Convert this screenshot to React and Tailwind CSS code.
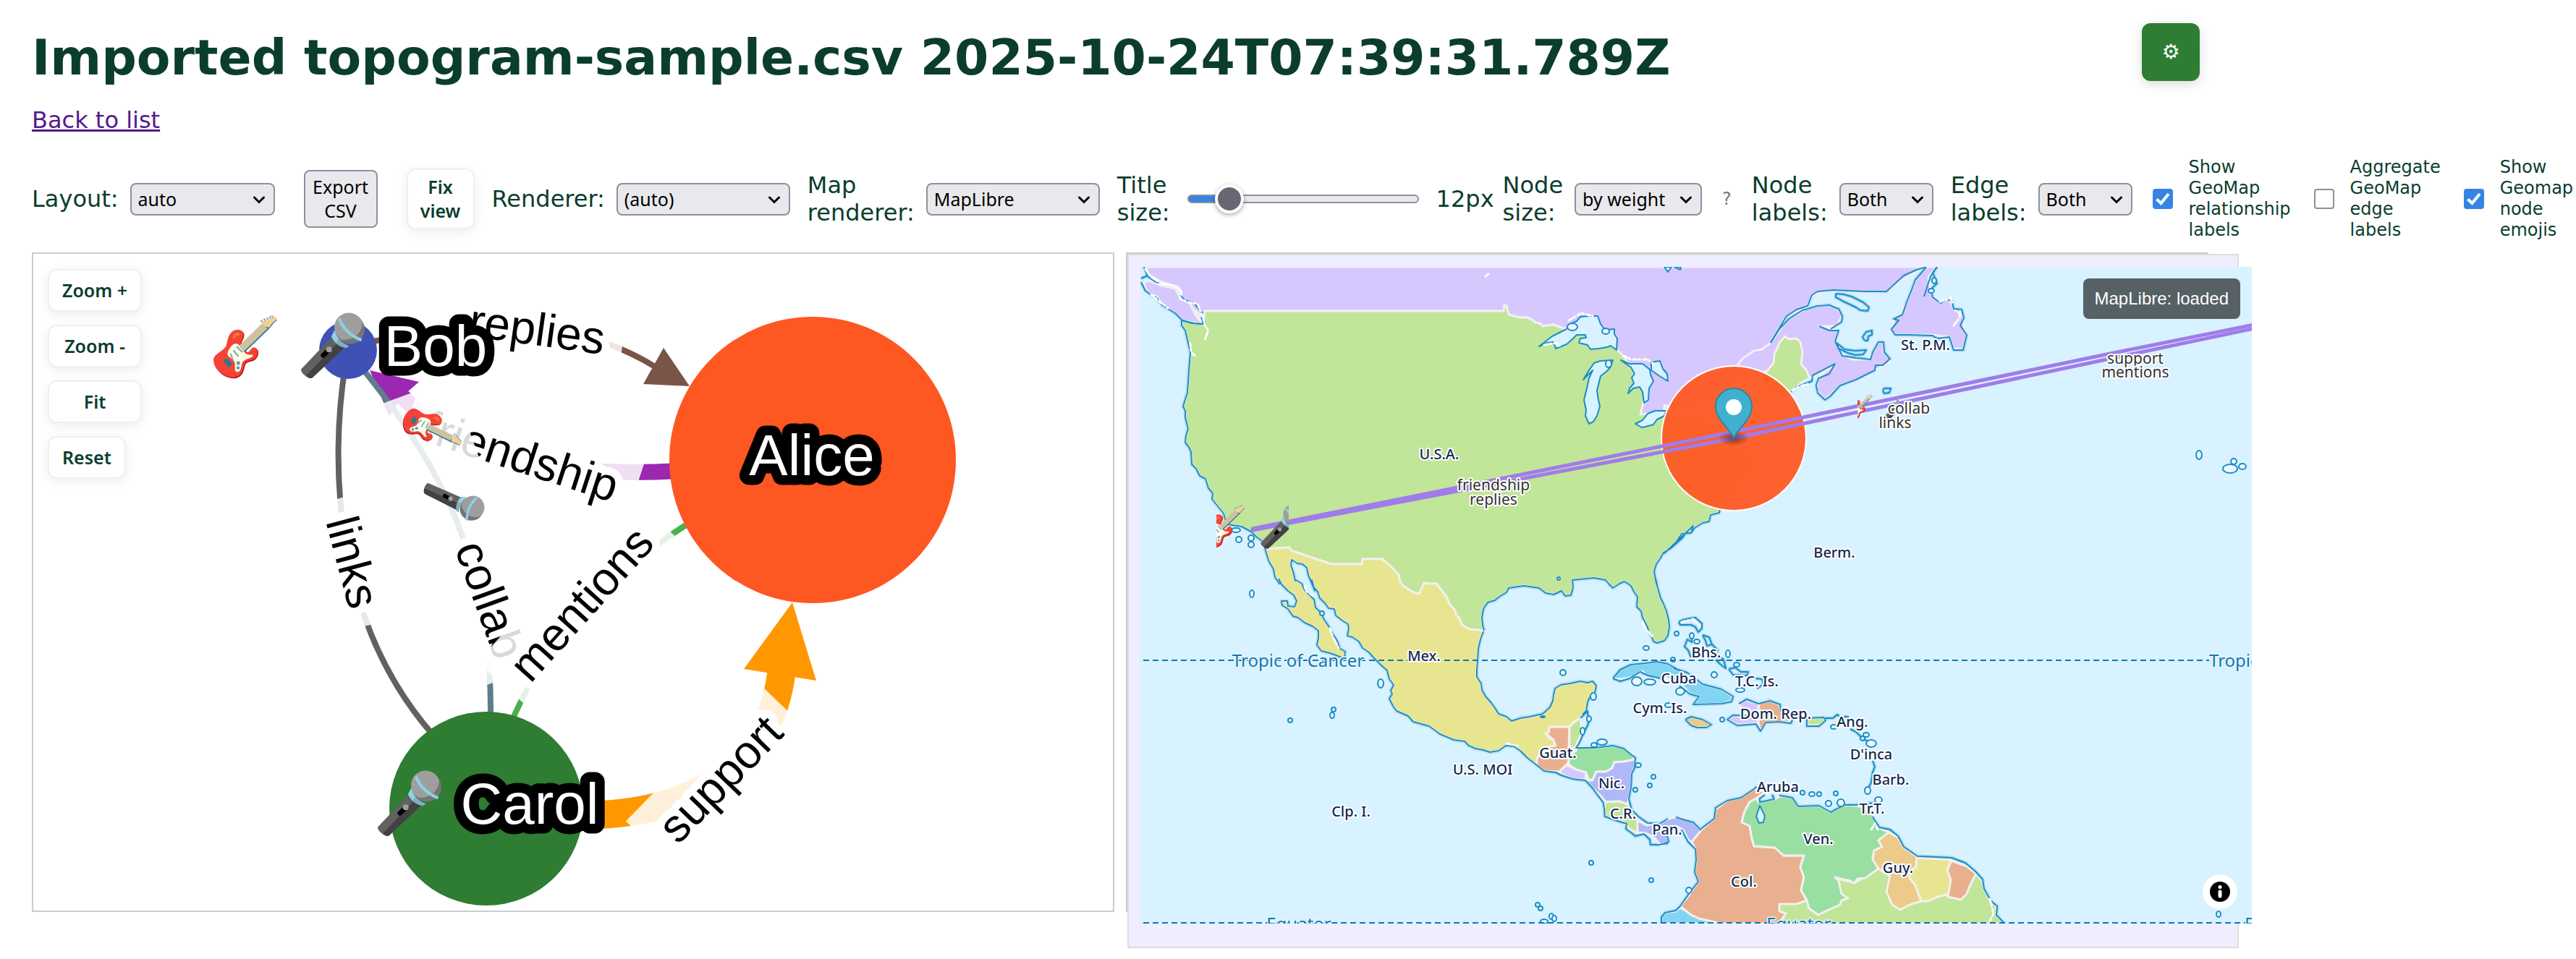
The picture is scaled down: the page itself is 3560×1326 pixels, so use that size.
import React from "react";

/* ---------- toolbar pieces ---------- */

function Select({ id, label, width, options, value }) {
  return (
    <div className="flex shrink-0 items-center gap-4">
      <label htmlFor={id} className="w-min text-[32px] leading-[38px]">
        {label}
      </label>
      <div className={"relative " + width}>
        <select
          id={id}
          defaultValue={value}
          className="block h-[45px] w-full appearance-none rounded-lg border-2 border-[#8f8f9d] bg-[#e9e9ed] pl-[9px] font-['Noto_Sans',sans-serif] text-[25px] leading-[33px] text-black"
        >
          {options.map((o) => (
            <option key={o}>{o}</option>
          ))}
        </select>
        <svg
          className="pointer-events-none absolute top-[18px] right-[13px] h-[11px] w-[18px]"
          viewBox="0 0 18 11"
          fill="none"
          stroke="#000"
          strokeWidth="3"
          strokeLinecap="round"
        >
          <path d="M2.500 2 L9 8.500 L15.500 2" />
        </svg>
      </div>
    </div>
  );
}

function Check({ id, label, checked }) {
  return (
    <div className="mx-1 flex shrink-0 items-center gap-[22px]">
      <span className="relative block size-7">
        <input
          id={id}
          type="checkbox"
          defaultChecked={checked}
          className="block size-7 appearance-none rounded-sm border-2 border-[#8f8f9d] bg-white checked:border-[#3584e4] checked:bg-[#3584e4]"
        />
        {checked && (
          <svg
            className="pointer-events-none absolute inset-0 size-7"
            viewBox="0 0 28 28"
            fill="none"
            stroke="#fff"
            strokeWidth="4"
          >
            <path d="M5.500 14.500 L11.500 20 L22 7" />
          </svg>
        )}
      </span>
      <label htmlFor={id} className="w-min text-2xl leading-[29px]">
        {label}
      </label>
    </div>
  );
}

const softButton =
  "rounded-xl border-2 border-[#f0f0f0] bg-white font-['Noto_Sans',sans-serif] text-[25px] leading-[33px] font-semibold text-[#0b3d2e] shadow-[0_4px_16px_rgba(0,0,0,0.07)]";

/* ---------- emoji drawings, on a 300 unit grid centred on (x, y) ---------- */

function Guitar({ x, y, size }) {
  return (
    <g transform={`translate(${x} ${y}) scale(${size / 240}) translate(-150 -150)`}>
      <path
        d="M74 156 C82 134 80 88 122 84 C152 86 150 108 136 130 C132 144 144 168 164 177 C178 174 174 160 188 158 C208 158 210 184 193 203 C178 218 158 208 149 228 C144 252 138 282 102 283 C62 282 22 249 20 208 C26 183 59 176 74 156 Z"
        fill="#b71c1c"
      />
      <path
        d="M70 150 C78 130 76 84 118 80 C148 82 147 105 132 128 C128 140 140 165 160 174 C174 171 170 156 185 154 C204 155 206 180 190 198 C175 213 155 203 145 224 C140 247 134 277 99 278 C59 277 18 245 18 204 C22 180 55 172 70 150 Z"
        fill="#f44336"
      />
      <path d="M98 108 C104 92 124 88 128 98 C128 108 106 106 100 124 Z" fill="#ff7043" />
      <path
        d="M78 172 C86 152 104 132 118 140 C134 147 138 168 153 181 C168 190 180 180 182 188 C172 204 142 198 136 222 C132 242 130 256 115 256 C98 250 116 224 100 206 C90 196 70 190 78 172 Z"
        fill="#fffde7"
      />
      <path d="M128 152 L148 174 L250 76 L238 64 Z" fill="#2f7889" />
      <path d="M124 148 L144 170 L246 72 L224 50 Z" fill="#cdc1a0" />
      <path d="M218 54 C224 40 240 44 252 34 C262 26 276 22 281 34 C279 42 266 42 262 52 C256 70 248 72 236 68 Z" fill="#f7cf90" />
      <path d="M236 71 L250 73 L266 52 L280 40" stroke="#2f7889" strokeWidth="4" fill="none" />
      <path d="M214 42 l8 6 M226 36 l8 6 M238 32 l7 5 M248 27 l7 5 M258 23 l7 5" stroke="#82aec0" strokeWidth="7" fill="none" />
      <path d="M116 152 L136 172 M102 168 L120 190 M90 182 L98 206" stroke="#82aec0" strokeWidth="7" fill="none" strokeLinecap="round" />
      <path d="M70 198 L97 222 L84 238 L57 212 Z" fill="#2f7889" />
      <circle cx="121" cy="219" r="8" fill="#6aa0b8" />
      <circle cx="120" cy="239" r="7" fill="#6aa0b8" />
    </g>
  );
}

function Microphone({ x, y, size }) {
  return (
    <g transform={`translate(${x} ${y}) scale(${size / 240}) translate(-150 -150)`}>
      <path d="M148 108 L200 154 L66 279 C52 290 12 258 19 244 Z" fill="#616161" />
      <path d="M172 132 L200 154 L66 279 C58 286 46 280 38 272 Z" fill="#424242" />
      <path d="M110 187 L128 170" stroke="#000" strokeWidth="20" strokeLinecap="round" />
      <circle cx="134" cy="163" r="12" fill="#9e9e9e" />
      <circle cx="221" cy="79" r="61" fill="#757575" />
      <path d="M272 48 C276 90 236 128 186 122 A60 60 0 1 1 272 48 Z" fill="#9e9e9e" />
      <path d="M158 82 C162 112 186 136 217 148 C208 158 200 158 192 154 C168 146 150 128 144 108 Z" fill="#82aec0" />
      <path d="M158 82 C160 98 166 108 174 118 L164 134 C154 126 146 116 144 108 Z" fill="#92d1e0" />
      <path d="M178 40 C196 80 226 106 264 122" stroke="#8dd0e0" strokeWidth="13" strokeLinecap="round" fill="none" />
    </g>
  );
}

/* ---------- network graph ---------- */

function EdgeLabel({ x, y, angle, length, lead = 0, children, extra }) {
  return (
    <g transform={`translate(${x} ${y}) rotate(${angle})`}>
      <rect x={-26 - lead} y={-75} width={length + 52 + lead} height={112} fill="#fff" opacity="0.85" />
      {extra}
      <text
        fontSize="64"
        fill="#000"
        stroke="#fff"
        strokeWidth="22"
        strokeLinejoin="round"
        paintOrder="stroke"
      >
        {children}
      </text>
    </g>
  );
}

function NodeLabel({ x, y, children }) {
  return (
    <text
      x={x}
      y={y}
      fontSize="80"
      textAnchor="middle"
      fill="#fff"
      stroke="#000"
      strokeWidth="27"
      strokeLinejoin="round"
      paintOrder="stroke"
    >
      {children}
    </text>
  );
}

function Graph() {
  return (
    <svg
      className="block h-auto w-full"
      viewBox="46 351 1492 908"
      fontFamily="'Liberation Sans', Arial, sans-serif"
      fill="none"
    >
      <path d="M478 500 C455 640 460 860 600 1018" stroke="#616161" strokeWidth="8" />
      <EdgeLabel x={450} y={721} angle={75} length={128}>links</EdgeLabel>

      <path d="M505 474 C680 440 800 440 910 510" stroke="#795548" strokeWidth="8" />
      <path d="M953 534 L917 481 L889 531 Z" fill="#795548" />
      <EdgeLabel x={646} y={464} angle={8} length={188}>replies</EdgeLabel>

      <path d="M552 544 C640 640 780 660 940 651" stroke="#9c27b0" strokeWidth="22" />
      <path d="M511 512 L579 528 L556 548 L538 575 Z" fill="#9c27b0" />
      <EdgeLabel x={582} y={609} angle={18} length={277}>friendship</EdgeLabel>

      <path d="M496 504 C610 640 680 780 678 990" stroke="#607d8b" strokeWidth="8" />
      <EdgeLabel
        x={628}
        y={758}
        angle={70}
        length={167}
        lead={196}
        extra={
          <>
            <Guitar x={-166} y={-26} size={64} />
            <Microphone x={-62} y={-22} size={64} />
          </>
        }
      >
        collab
      </EdgeLabel>

      <path d="M672 1118 Q727 798 1123 636" stroke="#4caf50" strokeWidth="8" />
      <EdgeLabel x={733} y={946} angle={-48} length={260}>mentions</EdgeLabel>

      <path d="M780 1127 C930 1132 1060 1082 1080 930" stroke="#ff9800" strokeWidth="39" />
      <path d="M1095 833 L1028 925 L1128 941 Z" fill="#ff9800" />
      <EdgeLabel x={937} y={1169} angle={-46} length={213}>support</EdgeLabel>

      <circle cx="481" cy="484" r="40" fill="#3f51b5" />
      <circle cx="1123" cy="636" r="198" fill="#ff5722" />
      <circle cx="672" cy="1118" r="134" fill="#2e7d32" />
      <Guitar x={339} y={479} size={80} />
      <Microphone x={460} y={479} size={80} />
      <Microphone x={566} y={1112} size={80} />
      <NodeLabel x={602} y={506}>Bob</NodeLabel>
      <NodeLabel x={1122} y={657}>Alice</NodeLabel>
      <NodeLabel x={732} y={1139}>Carol</NodeLabel>
    </svg>
  );
}

/* ---------- map ---------- */

/* Outlines are digitised per map tile; each tile maps its own grid to map units. */
const tile = (x0, y0, sx, sy) => (s) =>
  s
    .trim()
    .split(/\s+/)
    .map((p) => {
      const [x, y] = p.split(",").map(Number);
      return `${Math.round(x0 + x * sx)},${Math.round(y0 + y * sy)}`;
    })
    .join(" ");
const nw = tile(1540, 340, 0.5102, 0.3333);
const ne = tile(2300, 340, 0.5293, 0.3333);
const sw = tile(1540, 800, 0.5102, 0.3355);
const se = tile(2300, 800, 0.5293, 0.3355);

const westCoast = nw(
  "400,1225 385,1205 370,1185 345,1165 305,1155 300,1130 295,1110 280,1080 265,1050 267,1025 255,1005 247,965 232,955 222,925 210,905 208,855 202,835 192,815 195,785 200,760 192,710 192,685 186,665 192,635 198,610 202,520 205,440 198,390 192,350 182,330 182,310 210,320 242,325"
);
const usNorth = nw(
  "245,270 1055,270 1057,246 1062,250 1068,285 1082,292 1100,298 1118,296 1130,305 1140,318 1152,322 1160,333 1190,328 1205,335 1225,345 1310,350 1360,430 1380,460 1440,600 1425,700 1490,690"
);
const usEast = ne(
  "145,1085 143,1108 120,1115 118,1142 100,1148 80,1170 70,1192 45,1195 30,1230 15,1255 0,1275"
);
const usEast2 = nw("1568,1160 1562,1190 1548,1190 1538,1212 1520,1235 1505,1258 1488,1272 1478,1298 1468,1320 1463,1350 1466,1385 1470,1410");
const florida = sw(
  "1466,0 1472,40 1480,80 1488,105 1495,135 1502,170 1503,200 1500,235 1490,255 1470,264 1460,258 1456,240 1448,225 1444,200 1430,160 1426,135 1415,115 1418,75 1408,55 1400,30 1382,12 1368,20 1350,38 1338,22 1330,5 1300,-4 1240,5 1242,35 1236,68 1222,72 1212,52 1190,66 1168,60 1150,40 1110,30 1068,40 1062,58 1042,75 1030,88 1012,98 1000,125 996,160 998,190 1001,216"
);
const rioGrande = sw(
  "1000,218 985,212 962,210 940,190 935,165 926,150 924,130 908,105 900,75 888,52 872,22 850,22 838,17 828,60 820,63 800,48 782,30 775,12"
);
const rioGrande2 = nw("775,1395 770,1365 748,1330 725,1298 672,1298 670,1320 588,1320 530,1290 478,1262 475,1250 410,1256");

const bajaWest = nw("405,1240 412,1275 420,1310 432,1340 436,1375 448,1405");
const bajaWest2 = sw(
  "445,0 452,25 470,50 486,70 493,92 488,115 470,112 468,92 452,92 455,110 470,125 485,155 498,162 515,182 538,198 552,215 553,245 548,275 560,298 585,308 605,320 624,330 626,302 612,290 604,255 590,225 582,200 568,170 558,140 545,118 540,85 528,65 515,48 508,20 492,5"
);
const gulf = nw("490,1390 484,1350 478,1325 480,1303 495,1318 510,1320 522,1335 526,1365 535,1400 542,1430");
const mexPacific = sw(
  "535,5 538,30 550,55 556,80 572,105 580,122 596,125 600,152 618,172 634,188 636,208 632,235 645,240 662,258 672,285 690,305 702,325 720,352 738,380 745,415 757,438 748,462 752,478 744,495 755,525 765,545 795,565 810,590 852,608 882,640 920,664 948,670 960,688 978,700 1000,705 1018,715 1040,708 1060,690 1082,692 1100,708 1120,738 1145,768"
);
const mexGuat = sw("1145,745 1150,725 1172,695 1196,690 1190,665 1176,655 1168,638 1178,632 1178,610 1232,610 1240,592 1262,575");
const yucatan = sw(
  "1268,560 1278,545 1282,510 1288,488 1302,470 1306,440 1296,424 1282,428 1262,422 1235,432 1210,438 1194,452 1190,480 1188,505 1180,532 1160,558 1125,570 1100,574 1076,586 1062,568 1040,557 1030,535 1022,512 1005,485 996,460 994,432 982,405 981,372 984,340 985,290 992,250 1000,218"
);
const back = (p) => p.split(" ").reverse().join(" ");

const fills = [
  [
    "#d6c7ff",
    nw("85,87 95,120 130,150 175,170 185,225 238,290 242,300 245,270") + " " + usNorth + " " +
      ne("0,660 60,690 190,560 265,520 380,548 395,540 445,490 400,550 398,600 420,638 460,580 520,545 550,515 585,485 590,465 572,440 572,400 560,400 540,450 530,470 490,470 465,450 445,395 455,350 405,332 450,332 465,290 450,252 410,245 370,260 322,305 300,350 278,402 320,290 372,252 388,205 430,185 520,192 580,190 605,160 650,110 684,87"),
  ],
  ["#d6c7ff", nw("78,152 95,145 130,165 165,178 178,215 205,240 222,290 240,322 215,318 185,308 165,280 130,245 115,210 98,200 88,185")],
  [
    "#d6c7ff",
    ne("684,87 668,115 655,145 645,190 632,235 620,280 600,300 594,345 602,370 640,370 700,368 745,378 755,425 780,430 790,370 782,330 780,290 755,262 742,220 715,225 700,210 695,180 690,130 712,87"),
  ],
  ["#c1e599", westCoast + " " + usNorth + " " + ne("100,700 250,900") + " " + usEast + " " + usEast2 + " " + florida + " " + rioGrande + " " + rioGrande2],
  ["#c1e599", ne("250,540 268,520 285,485 288,450 302,400 315,376 325,388 345,384 356,400 360,440 358,490 372,520 380,548 360,565 345,585 330,605 270,620")],
  ["#e7e58f", back(rioGrande2) + " " + back(rioGrande) + " " + back(yucatan) + " " + back(mexGuat) + " " + back(mexPacific) + " " + back(gulf) + " " + back(bajaWest2) + " " + back(bajaWest)],
  ["#e8b08e", sw("1178,610 1232,610 1230,700 1252,705 1232,730 1228,760 1205,795 1165,792 1145,768 1145,745 1150,725 1172,695 1196,690 1190,665 1168,638 1178,632")],
  ["#c1e599", sw("1232,610 1245,592 1262,575 1266,620 1262,650 1248,695 1232,700")],
  ["#d6c7ff", sw("1205,797 1225,768 1250,788 1278,795 1275,830 1240,826 1215,812")],
  ["#9adfa2", sw("1230,735 1252,705 1250,695 1300,698 1350,690 1380,700 1400,718 1410,745 1380,755 1355,756 1348,782 1330,795 1305,795 1295,830 1283,828 1278,800 1250,788 1230,765")],
  ["#b0b8f8", sw("1275,832 1295,832 1305,795 1330,795 1348,782 1355,756 1380,755 1412,745 1410,780 1402,805 1400,860 1394,910 1390,930 1368,918 1330,920 1318,895 1295,865")],
  ["#c1e599", sw("1330,920 1368,918 1390,930 1402,960 1420,985 1418,1048 1395,1030 1380,1005 1332,985 1325,950")],
  ["#b0b8f8", sw("1418,995 1440,1015 1475,1010 1490,995 1518,983 1550,990") + " " + se("45,985 75,1005 97,1038 85,1060 75,1088 62,1075 50,1035 30,1020 5,1045 12,1085 0,1098") + " " + sw("1480,1100 1465,1070 1440,1050 1418,1045")],
  ["#c1e599", se("300,1340 372,1325 400,1385 445,1235 497,1255 560,1195 590,1225 650,1240 815,1220 832,1245 836,1280 848,1320 866,1345 868,1385 886,1422 300,1422")],
  ["#82d4f3", se("160,1422 90,1400 42,1355 30,1370 2,1378 -8,1395 -8,1422")],
  ["#e8b08e", se("97,1038 115,1010 130,990 134,950 165,915 200,902 235,865 262,880 240,905 222,920 210,960 203,1005 222,1018 228,1070 235,1102 290,1110 312,1142 365,1142 356,1190 365,1230 358,1285 372,1325 345,1340 300,1342 300,1370 318,1380 300,1422 150,1422 90,1400 70,1385 42,1350 65,1305 88,1250 80,1210 84,1160 80,1110 72,1085")],
  ["#9adfa2", se("240,905 245,920 288,908 305,897 335,903 350,940 405,937 435,962 470,932 500,935 525,945 548,985 560,1025 585,1045 575,1065 560,1080 568,1105 548,1122 545,1155 560,1195 525,1235 505,1238 497,1255 485,1245 445,1232 455,1245 462,1300 480,1318 462,1325 460,1345 425,1368 402,1387 378,1360 372,1325 358,1285 365,1230 356,1190 365,1142 312,1142 290,1110 235,1102 228,1070 222,1018 203,1005 210,960 222,920")],
  ["#ebca8a", se("585,1045 610,1068 625,1110 660,1145 658,1190 640,1205 640,1235 655,1265 670,1328 640,1345 615,1365 595,1345 580,1290 590,1225 560,1195 545,1155 548,1122 568,1105 560,1080")],
  ["#e7e58f", se("660,1150 750,1160 738,1200 748,1240 745,1300 715,1310 690,1330 670,1328 655,1265 640,1235 640,1205 658,1190")],
  ["#e8b08e", se("750,1162 790,1185 815,1215 800,1260 790,1300 775,1322 740,1312 748,1240 738,1200")],
  ["#82d4f3", sw("1350,412 1370,375 1400,355 1440,350 1470,343 1500,352 1530,378") + " " + se("25,370 60,388 100,435 150,455 178,485 175,505 150,515 75,518 90,485 68,478 48,440 0,405") + " " + sw("1500,425 1480,410 1445,408 1430,383 1410,405 1370,415")],
  ["#ebca8a", se("55,580 70,570 100,580 123,602 110,615 85,615 70,605")],
  ["#d6c7ff", se("195,512 215,500 246,515 245,595 190,602 165,580 180,565 225,565 222,540 200,530")],
  ["#e8b08e", se("248,512 275,505 300,518 305,545 330,575 325,590 265,592 252,628 245,595")],
  ["#c1e599", se("372,575 415,572 422,585 405,605 372,605")],
];

const coasts = [
  nw("80,87 90,125 112,150 130,155"),
  nw("72,135 90,122"),
  nw("72,150 85,185 98,200 115,215 130,245 165,280 172,292 185,308 215,320 242,325 238,300 240,280 215,238 190,225 178,205"),
  westCoast,
  bajaWest,
  bajaWest2 + " " + gulf + " " + mexPacific + " " +
    sw("1165,792 1195,798 1212,812 1240,826 1275,832 1295,865 1325,925 1328,980 1345,990 1388,1010 1385,1030 1402,1048 1412,1062 1435,1052 1450,1075 1452,1098 1475,1098 1500,1090"),
  yucatan,
  sw("1262,575 1282,545 1284,600 1270,640 1258,680 1250,698 1300,698 1350,688 1380,700 1412,740 1410,780 1402,805 1400,860 1394,910 1402,955 1420,980 1445,1008 1475,1010 1500,990"),
  florida,
  usEast + " " + usEast2,
  ne("330,605 345,585 385,560 388,538 445,490 430,530 402,550 396,580 400,610 420,638 432,625 460,578 500,555 550,515 552,495 570,495 590,468 575,440 572,400 560,398 545,440 538,470 500,465 465,455 445,395 455,350 430,350 405,332"),
  ne("435,345 462,315 465,290 455,262 430,245 400,248 360,268 325,302 300,345 278,402"),
  ne("278,402 320,290 345,265 375,248 385,205 400,190 440,184 520,190 580,188 600,158 625,122 660,100 684,87"),
  ne("712,87 695,125 678,210"),
  ne("684,87 655,140 645,190 632,235 622,285 598,302 612,308 594,345 602,370 640,368 700,372 712,385 745,378 755,432 780,432 790,370 772,330 782,300 776,265 755,262 750,225 735,222 722,238 700,212 695,180 712,155 700,110 712,87"),
  ne("448,198 468,202 490,210 520,235 535,255 530,270 512,268 500,255 468,232 448,212 448,198"),
  ne("524,392 518,378 528,358 543,352 543,368 532,376 530,392 524,392"),
  ne("450,402 470,430 498,435 528,432 520,450 498,452 480,445 455,425 450,402"),
  ne("570,600 575,590 592,592 588,608 575,612 570,600"),
  ne("0,515 8,530 5,560"),
  se("97,1030 130,990 134,945 165,915 200,902 242,858"),
  se("262,890 250,905 250,920 288,908 282,890"),
  se("300,895 335,903 350,940 405,937 435,962 470,932 500,932 550,925"),
  se("545,980 562,1025 590,1035 610,1062 625,1105 662,1145 710,1148 750,1152 785,1170 812,1208 832,1240 836,1280 852,1325 870,1350 868,1385 888,1422"),
  se("45,1035 62,1085 82,1115 84,1160 80,1210 88,1250 65,1300 42,1350 30,1368 2,1378 -8,1395 -8,1422"),
  se("0,1095 12,1085 5,1045"),
  se("30,985 75,1005 97,1038"),
  sw("1350,412 1370,375 1400,355 1440,350 1470,343 1500,352 1530,378") + " " + se("25,370 60,388 100,435 150,455 180,485 175,508 150,515 75,518 90,485 68,478 40,440"),
  se("55,580 70,570 100,580 123,602 110,615 85,615 70,605 55,580"),
  se("195,515 215,498 246,515 275,503 302,518 305,545 335,580 330,595 300,590 265,592 252,628 240,598 190,604 165,580 180,562 225,565"),
  se("372,575 415,572 422,585 405,607 372,607 372,575"),
  sw("1350,412 1370,422 1395,412 1425,385 1445,400 1480,412"),
  se("38,180 50,170 68,165 82,162 98,185 98,205 88,220 82,200 70,192 42,190 38,180"),
  se("100,232 118,240 125,270 112,278 108,255 100,232"),
  se("70,325 62,295 52,280 60,250 72,262 72,228"),
  se("125,270 140,295 135,310 155,335 160,370 148,355 135,335"),
  se("168,372 185,368 200,385 220,385 215,400 180,395 168,372"),
  se("420,575 440,575 452,560 460,570 482,570"),
  se("485,620 500,632 515,655 530,672 540,690"),
  se("545,750 550,775 545,800 540,840 528,880"),
  se("238,410 255,415 258,435 242,452"),
];

const lakes = [
  nw("1150,418 1168,395 1185,375 1225,345 1235,325 1252,312 1262,295 1285,290 1310,290 1318,325 1328,348 1355,345 1354,365 1362,385 1360,432 1345,415 1335,420 1312,425 1290,430 1282,412 1258,402 1262,385 1278,382 1276,370 1252,370 1242,385 1225,408 1195,425 1190,398 1172,402"),
  nw("1270,555 1285,515 1300,485 1318,478 1350,475 1345,500 1335,520 1318,540 1308,600 1312,640 1315,665 1308,705 1298,730 1285,738 1275,705 1278,680 1272,640 1280,590 1285,550 1295,515"),
  nw("1372,475 1395,490 1430,490 1450,512 1452,535 1460,560 1448,590 1446,640 1435,652 1430,605 1422,585 1405,590 1392,612 1395,590 1408,570 1402,545 1410,530 1400,505"),
  nw("1455,482 1478,478 1485,510 1498,530 1500,560 1480,542 1455,515"),
  nw("1428,752 1412,738 1430,722 1445,695 1465,685 1495,685 1490,705 1470,720 1460,742 1438,750"),
  nw("1490,87 1500,108 1510,87"),
  nw("1518,87 1532,100 1534,87"),
  se("250,935 262,978 258,1005 248,1008 240,982"),
];

const islets = [
  [sw("373,62"), 3, 5], [sw("722,432"), 4, 6], [sw("477,584"), 3, 3], [sw("594,540"), 3, 3], [sw("590,563"), 3, 4],
  [sw("1216,387"), 4, 4], [sw("1292,1172"), 3, 3], [sw("1454,1242"), 3, 3], [sw("1461,817"), 3, 3], [sw("1451,853"), 3, 3],
  [sw("1419,769"), 4, 3], [sw("1411,871"), 3, 3], [sw("1147,1345"), 3, 3], [sw("1154,1358"), 3, 3], [sw("1184,1392"), 3, 4],
  [sw("1192,1402"), 3, 4], [sw("1165,1412"), 5, 3], [sw("1322,675"), 7, 4], [sw("1300,685"), 4, 3], [sw("1415,422"), 7, 6],
  [sw("1450,427"), 8, 4], [sw("1532,465"), 6, 5], [sw("1298,485"), 4, 5], [sw("1286,578"), 3, 4], [sw("1269,628"), 3, 5],
  [sw("1523,226"), 3, 3], [sw("1513,334"), 3, 3], [sw("1502,522"), 5, 3], [sw("562,142"), 3, 3], [sw("1160,570"), 3, 1],
  [sw("1440,285"), 4, 3], [nw("338,1219"), 4, 4], [nw("370,1212"), 4, 4], [nw("370,1238"), 4, 4], [nw("330,1180"), 6, 3],
  [nw("1240,335"), 7, 5], [nw("1330,353"), 5, 4], [nw("1338,490"), 4, 5], [nw("1203,1380"), 2, 2],
  [ne("1396,868"), 4, 6], [ne("1477,924"), 10, 6], [ne("1486,894"), 4, 4], [ne("1509,915"), 5, 4],
  [ne("705,145"), 3, 4], [ne("698,186"), 4, 3], [se("131,396"), 4, 4], [se("188,356"), 4, 3], [se("167,310"), 3, 5],
  [se("85,260"), 4, 3], [se("72,235"), 3, 4], [se("152,580"), 3, 3], [se("199,458"), 6, 3], [se("442,612"), 4, 3],
  [se("517,660"), 3, 3], [se("528,645"), 4, 3], [se("540,680"), 7, 5], [se("361,881"), 3, 3], [se("386,888"), 4, 3],
  [se("404,888"), 3, 3], [se("447,885"), 3, 3], [se("428,928"), 4, 4], [se("461,925"), 5, 5], [se("560,912"), 5, 4],
  [se("531,872"), 4, 5], [se("1447,1382"), 3, 4], [se("64,1286"), 4, 4],
];

const places = [
  ["U.S.A.", 1989, 635], ["Mex.", 1968, 914], ["Guat.", 2153, 1048], ["Nic.", 2227, 1090], ["C.R.", 2243, 1132],
  ["Pan.", 2304, 1154], ["U.S. MOI", 2049, 1071], ["Clp. I.", 1867, 1129], ["Cym. Is.", 2294, 986], ["Cuba", 2320, 945],
  ["Bhs.", 2358, 909], ["T.C. Is.", 2428, 949], ["Dom. Rep.", 2454, 994], ["Ang.", 2560, 1005], ["D'inca", 2586, 1050],
  ["Barb.", 2613, 1085], ["Aruba", 2457, 1095], ["Tr.T.", 2587, 1125], ["Ven.", 2513, 1167], ["Guy.", 2623, 1207],
  ["Col.", 2410, 1226], ["St. P.M.", 2661, 484], ["Berm.", 2535, 771],
];
const links = [
  ["friendship", 2064, 678], ["replies", 2064, 698], ["support", 2951, 503], ["mentions", 2951, 522],
  ["collab", 2638, 572], ["links", 2619, 592],
];
const circles = [
  ["Tropic of Cancer", 1794, 922, "middle"], ["Tropic of Cancer", 3053, 922, "start"],
  ["Equator", 1795, 1286, "middle"], ["Equator", 2486, 1286, "middle"], ["Equator", 3102, 1286, "start"],
];

function MapView() {
  return (
    <svg
      className="block h-auto w-full bg-[#d8f2ff]"
      viewBox="1576 369 1536 908"
      fontFamily="'Noto Sans', sans-serif"
      fill="none"
    >
      <defs>
        <clipPath id="emojiA"><rect x="1681" y="690" width="100" height="75" /></clipPath>
        <clipPath id="emojiB"><rect x="2567" y="540" width="57" height="45" /></clipPath>
        <radialGradient id="pinShadow">
          <stop offset="0" stopColor="#000" stopOpacity="0.45" />
          <stop offset="1" stopColor="#000" stopOpacity="0.05" />
        </radialGradient>
      </defs>
      {coasts.map((p, i) => (
        <polyline key={i} points={p} stroke="#a9d9f0" strokeWidth="5" strokeLinejoin="round" />
      ))}
      {fills.map(([c, p], i) => (
        <polygon key={i} points={p} fill={c} stroke="#f3f0ee" strokeWidth="3" strokeLinejoin="round" />
      ))}
      <polyline points={ne("190,495 205,465 235,435 255,428 278,402")} stroke="#f3eeff" strokeWidth="3" />
      {coasts.map((p, i) => (
        <polyline key={i} points={p} stroke="#198ec8" strokeWidth="2" strokeLinejoin="round" />
      ))}
      {lakes.map((p, i) => (
        <polygon key={i} points={p} fill="#d8f2ff" stroke="#198ec8" strokeWidth="2" strokeLinejoin="round" />
      ))}
      {islets.map(([p, rx, ry], i) => {
        const [x, y] = p.split(",");
        return <ellipse key={i} cx={x} cy={y} rx={rx} ry={ry} fill="#eef9ff" stroke="#198ec8" strokeWidth="2" />;
      })}
      <g stroke="#fff" strokeWidth="3" strokeLinecap="round" strokeDasharray="5 3 2 4">
        <polyline points={nw("85,95 98,125 125,155 165,165 182,190 178,220 200,235 225,240 240,290 245,330 255,350 245,390")} />
        <polyline points={nw("100,200 118,225 145,258")} />
        <polyline points={nw("205,405 208,440 222,458")} />
        <polyline points={nw("1230,310 1265,278 1295,290")} />
        <polyline points={nw("1165,410 1195,402 1205,415")} />
        <polyline points={nw("1380,455 1400,470 1445,470 1460,490")} />
        <polyline points={nw("1005,125 1015,115")} />
        <polyline points={ne("720,230 748,215 752,235")} />
        <polyline points={ne("755,330 770,300 772,270")} />
        <polyline points={ne("335,600 350,585 375,572")} />
        <polyline points={sw("515,30 520,50 540,75")} />
        <polyline points={sw("585,205 592,240 608,285")} />
        <polyline points={sw("1062,680 1092,688")} />
        <polyline points={sw("1430,180 1438,210 1460,240")} />
        <polyline points={se("45,180 75,168 92,195")} />
        <polyline points={se("540,1035 550,1010 558,1035")} />
        <polyline points={se("850,1320 860,1380 850,1410")} />
      </g>
      <g stroke="#1077b0" strokeWidth="2" strokeDasharray="8 5">
        <path d="M1580 913 H3053" />
        <path d="M1580 1276 H3112" />
      </g>

      <circle cx="2396" cy="606" r="100" fill="#ff5722" fillOpacity="0.94" stroke="#fff" strokeWidth="2" />
      <g stroke="#a07cea" strokeWidth="5" strokeLinecap="round" strokeLinejoin="round">
        <path d="M1731 731 L2396 597 L2911 490 L3120 448" />
        <path d="M1731 733 L2396 606 L2911 497 L3120 453" />
      </g>
      <g clipPath="url(#emojiA)">
        <Guitar x={1691} y={727} size={54} />
        <Microphone x={1772} y={729} size={54} />
      </g>
      <g clipPath="url(#emojiB)">
        <Guitar x={2571} y={562} size={31} />
        <Microphone x={2620} y={565} size={31} />
      </g>

      <g fontSize="24" fill="#1077b0" stroke="#e6f6ff" strokeWidth="3" paintOrder="stroke" strokeLinejoin="round">
        {circles.map(([t, x, y, a], i) => (
          <text key={i} x={x} y={y} textAnchor={a}>{t}</text>
        ))}
      </g>
      <g fontSize="20" fontWeight="500" fill="#15294f" stroke="#fff" strokeWidth="4" paintOrder="stroke" strokeLinejoin="round" textAnchor="middle">
        {places.map(([t, x, y]) => (
          <text key={t} x={x} y={y}>{t}</text>
        ))}
      </g>
      <g fontSize="21" fill="#333" stroke="#fff" strokeWidth="4" paintOrder="stroke" strokeLinejoin="round" textAnchor="middle">
        {links.map(([t, x, y]) => (
          <text key={t} x={x} y={y}>{t}</text>
        ))}
      </g>

      <ellipse cx="2396" cy="606" rx="20" ry="10" fill="url(#pinShadow)" />
      <path
        d="M2396 606 C2390 592 2371 580 2371 562 A25 25 0 0 1 2421 562 C2421 580 2402 592 2396 606 Z"
        fill="#3fb1ce"
        stroke="#2d86a0"
        strokeWidth="2"
      />
      <circle cx="2396" cy="563" r="11" fill="#fff" />
    </svg>
  );
}

/* ---------- page ---------- */

export default function App() {
  return (
    <main className="overflow-x-clip bg-white px-[44px] pt-8 pb-16 font-['DejaVu_Sans',sans-serif] text-[#0b3d2e]">
      <div className="max-w-[3008px]">
        <header className="flex items-start justify-between pr-3">
          <h1 className="pt-2 text-[68px] leading-[80px] font-bold">
            Imported topogram-sample.csv 2025-10-24T07:39:31.789Z
          </h1>
          <button
            aria-label="Settings"
            className="flex size-20 items-center justify-center rounded-xl bg-[#2e7d32] text-[28px] text-white shadow-[0_4px_16px_rgba(0,0,0,0.15)]"
          >
            ⚙
          </button>
        </header>
        <a href="#list" className="mt-[27px] block w-max text-[32px] leading-[38px] text-[#551a8b] underline">
          Back to list
        </a>

        <div className="mt-8 flex w-max items-center gap-6">
          <Select id="layout" label="Layout:" width="w-[200px]" value="auto" options={["auto"]} />
          <button className="mx-4 w-[102px] rounded-lg border-2 border-[#8f8f9d] bg-[#e9e9ed] px-2 py-[5px] font-['Noto_Sans',sans-serif] text-[25px] leading-[33px] text-black">
            Export CSV
          </button>
          <button className={softButton + " w-[94px] px-4 py-[7px]"}>Fix view</button>
          <Select id="renderer" label="Renderer:" width="w-[240px]" value="(auto)" options={["(auto)"]} />
          <Select id="map" label="Map renderer:" width="w-[240px]" value="MapLibre" options={["MapLibre"]} />
          <div className="-mr-3 flex items-center gap-6">
            <label htmlFor="title-size" className="w-min text-[32px] leading-[38px]">
              Title size:
            </label>
            <input
              id="title-size"
              type="range"
              min="4"
              max="64"
              defaultValue="12"
              className="h-3 w-[320px] appearance-none rounded-full border-2 border-[#8f8f9d] bg-[linear-gradient(to_right,#3584e4_60px,#e9e9ed_60px)] [&::-webkit-slider-thumb]:size-10 [&::-webkit-slider-thumb]:appearance-none [&::-webkit-slider-thumb]:rounded-full [&::-webkit-slider-thumb]:border-4 [&::-webkit-slider-thumb]:border-white [&::-webkit-slider-thumb]:bg-[#676774] [&::-webkit-slider-thumb]:shadow-[0_2px_6px_rgba(0,0,0,0.35)]"
            />
            <span className="text-[32px] leading-[38px]">12px</span>
          </div>
          <Select id="node-size" label="Node size:" width="w-[176px]" value="by weight" options={["by weight"]} />
          <span className="mx-1 text-2xl text-[#777]">?</span>
          <Select id="node-labels" label="Node labels:" width="w-[130px]" value="Both" options={["Both"]} />
          <Select id="edge-labels" label="Edge labels:" width="w-[130px]" value="Both" options={["Both"]} />
          <Check id="rel" label="Show GeoMap relationship labels" checked />
          <Check id="agg" label="Aggregate GeoMap edge labels" />
          <Check id="emo" label="Show Geomap node emojis" checked />
        </div>

        <div className="mt-4 flex items-start gap-4">
          <section className="relative flex-1 border-2 border-[#ccc]">
            <Graph />
            <div className="absolute top-[21px] left-5 flex flex-col items-start gap-[18px]">
              <div className="flex flex-col gap-[18px]">
                <button className={softButton + " px-[18px] py-[11px]"}>Zoom +</button>
                <button className={softButton + " px-[18px] py-[11px]"}>Zoom -</button>
                <button className={softButton + " px-[18px] py-[11px]"}>Fit</button>
              </div>
              <button className={softButton + " px-[18px] py-[11px]"}>Reset</button>
            </div>
          </section>

          <section className="h-[912px] flex-1 border-2 border-[#ccc]">
            <div className="-mr-[44px] border-2 border-[#ddd] bg-[#eef] pt-4 pb-8 pl-4">
              <div className="relative -mr-5">
                <MapView />
                <div className="absolute top-4 right-4 rounded-lg bg-black/60 px-4 py-[14px] font-['Liberation_Sans',sans-serif] text-2xl leading-7 text-white">
                  MapLibre: loaded
                </div>
                <button
                  aria-label="Attribution"
                  className="absolute right-5 bottom-5 flex size-12 items-center justify-center rounded-full bg-white"
                >
                  <svg className="size-7" viewBox="0 0 28 28">
                    <circle cx="14" cy="14" r="14" fill="#000" />
                    <circle cx="14" cy="7.500" r="2.500" fill="#fff" />
                    <rect x="11.500" y="11.500" width="5" height="11" rx="2.500" fill="#fff" />
                  </svg>
                </button>
              </div>
            </div>
          </section>
        </div>
      </div>
    </main>
  );
}
